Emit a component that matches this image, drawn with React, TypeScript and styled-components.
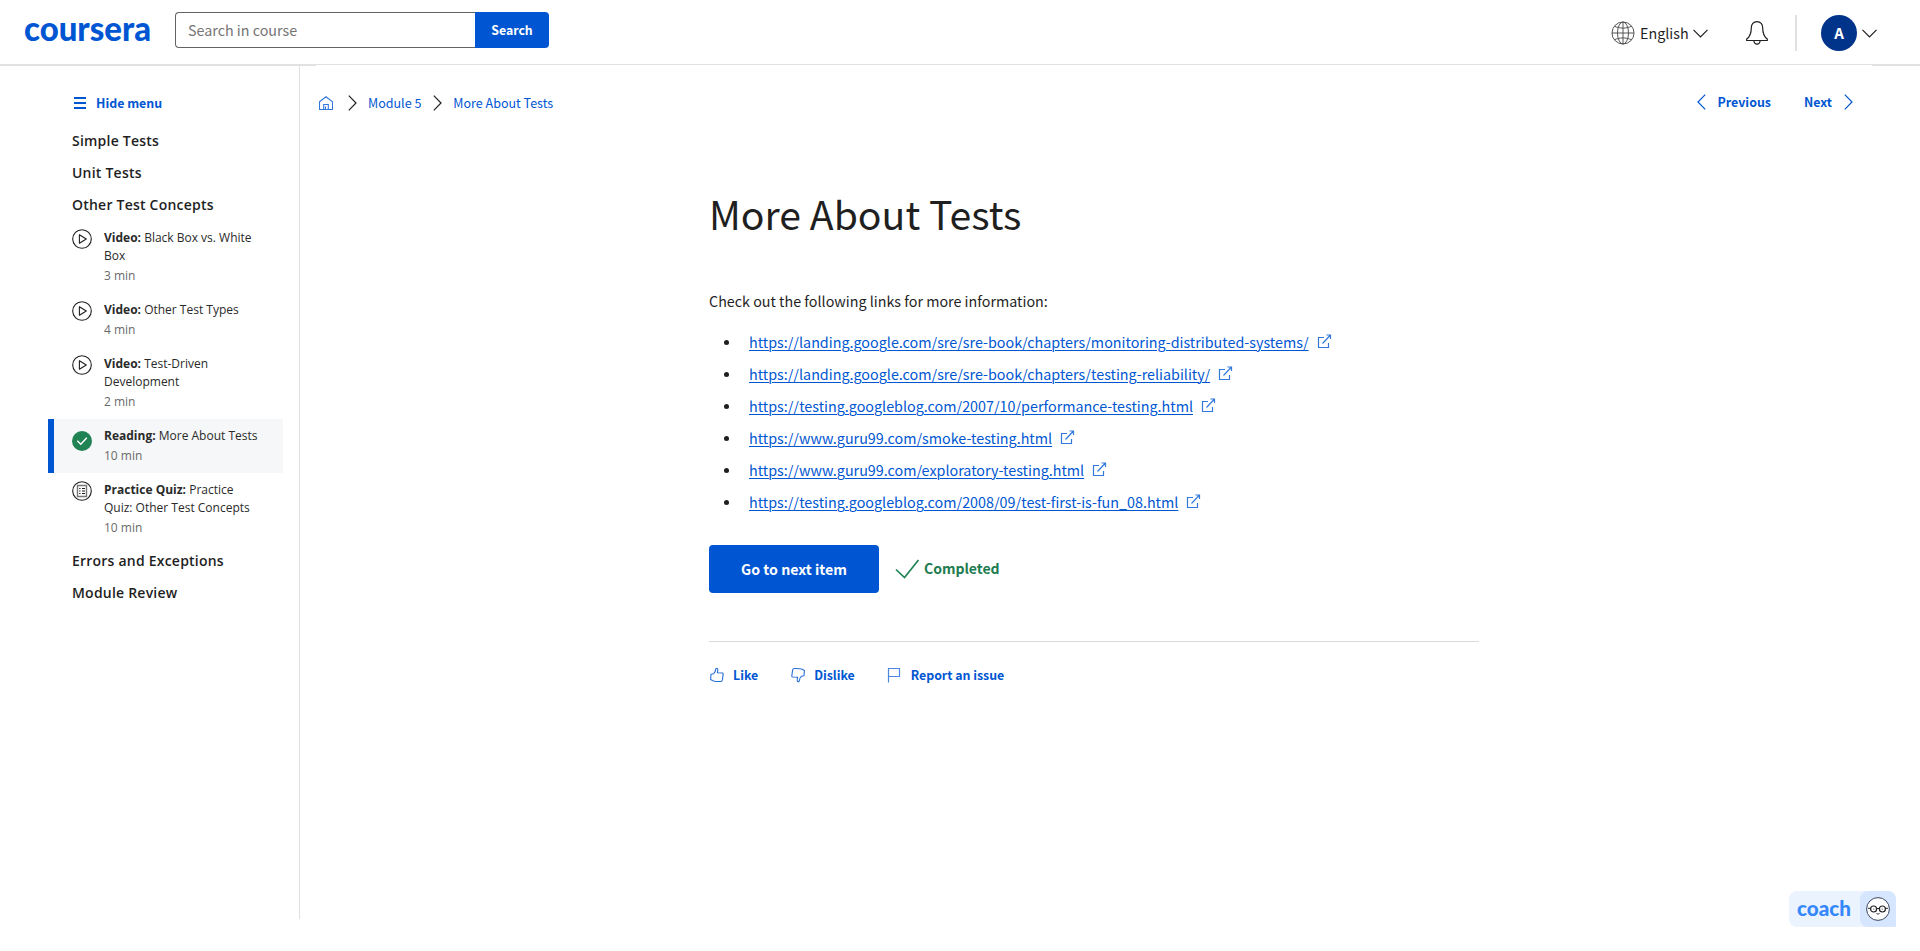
import React from 'react';
import styled, { createGlobalStyle, css } from 'styled-components';

const sans = '"Noto Sans CJK JP", "Noto Sans", sans-serif';
const side = '"Open Sans", sans-serif';
const blue = '#0056d2';

const GlobalStyle = createGlobalStyle`
  *, *::before, *::after { box-sizing: border-box; }
  html, body { margin: 0; padding: 0; }
  body { background: #fff; color: #1f1f1f; font-family: ${sans}; overflow: hidden; }
  a { color: ${blue}; text-decoration: none; }
  svg { display: block; flex: none; }
`;

const Page = styled.div`
  display: flex;
  flex-direction: column;
  height: 951px;
  position: relative;
`;

const Header = styled.header`
  display: flex;
  flex: none;
  height: 65px;
  padding: 0 43px 0 24px;
  border-bottom: 1px solid #e1e1e1;
`;

const Logo = styled.div`
  width: 151px;
  padding-top: 12px;
  svg { overflow: visible; }
`;

const SearchForm = styled.form`
  display: flex;
  width: 374px;
  height: 36px;
  margin-top: 12px;
`;

const SearchInput = styled.input`
  width: 300px;
  border: 1px solid #636363;
  border-right: 0;
  border-radius: 4px 0 0 4px;
  padding: 0 12px 1px;
  font: 400 14.3px ${sans};
  outline: none;
  &::placeholder { color: #757575; opacity: 1; }
`;

const SearchButton = styled.button`
  width: 74px;
  border: 0;
  border-radius: 0 4px 4px 0;
  background: ${blue};
  color: #fff;
  font: 700 12.3px ${sans};
  padding: 0 0 1px;
`;

const HeaderTools = styled.div`
  display: flex;
  margin-left: auto;
  padding-top: 15px;
  height: 51px;
  align-items: center;
`;

const Language = styled.div`
  display: flex;
  align-items: center;
  width: 135px;
  font-size: 14.3px;
  span { width: 58px; padding: 0 0 2px 5px; }
`;

const Bell = styled.div`
  width: 49px;
`;

const HeaderRule = styled.div`
  width: 2px;
  height: 36px;
  background: #e1e1e1;
  margin-right: 24px;
`;

const Avatar = styled.div`
  width: 36px;
  height: 36px;
  margin-right: 5px;
  border-radius: 50%;
  background: #00348a;
  color: #fff;
  font: 700 15px/35px ${sans};
  text-align: center;
`;

const Body = styled.div`
  display: flex;
  flex: none;
  height: 854px;
  border-top: 1px solid #e1e1e1;
`;

const Sidebar = styled.nav`
  width: 300px;
  height: 854px;
  margin-top: -1px;
  border-right: 1px solid #e1e1e1;
  padding: 28px 16px 0 48px;
  font-family: ${side};
`;

const HideMenu = styled.button`
  display: flex;
  align-items: center;
  height: 20px;
  margin-bottom: 12px;
  padding: 0 0 0 26px;
  gap: 10px;
  border: 0;
  background: none;
  color: ${blue};
  font: 700 12.4px/20px ${sans};
`;

const SectionTitle = styled.h2`
  margin: 0;
  padding-left: 24px;
  font: 600 14px/32px ${side};
  letter-spacing: 0.22px;
  color: #1f1f1f;
`;

const Item = styled.div<{ $active?: boolean }>`
  display: flex;
  padding: 8px 24px 8px 24px;
  ${p => p.$active && css`
    background: #f5f7f8;
    border-left: 6px solid ${blue};
    padding-left: 18px;
  `}
`;

const ItemIcon = styled.div<{ $active?: boolean }>`
  width: 32px;
  flex: none;
  padding-top: ${p => (p.$active ? 4 : 0)}px;
`;

const ItemTitle = styled.div`
  font-size: 12px;
  line-height: 18px;
  color: #2a2a2a;
  strong { font-weight: 700; }
`;

const ItemMeta = styled.div`
  margin-top: 2px;
  font-size: 12px;
  line-height: 18px;
  color: #6a6a6a;
`;

const Main = styled.main`
  width: 1556px;
  margin: -1px 0 0 16px;
  background: #fff;
  padding: 0 16px 0 3px;
`;

const TopBar = styled.div`
  display: flex;
  justify-content: space-between;
  height: 76px;
  padding-top: 27px;
`;

const Crumbs = styled.div`
  display: flex;
  align-items: center;
  height: 22px;
  font-size: 12.52px;
  a { white-space: nowrap; padding-bottom: 2px; }
`;

const CrumbGap = styled.span<{ $left: number }>`
  padding: 0 11px 0 ${p => p.$left}px;
`;

const Pager = styled.div`
  display: flex;
  height: 20px;
  gap: 33px;
  padding-right: 3px;
`;

const PagerLink = styled.a`
  display: flex;
  align-items: center;
  gap: 12px;
  font-size: 12.4px;
  font-weight: 700;
`;

const Article = styled.article`
  width: 770px;
  margin: 45px 0 0 390px;
`;

const Title = styled.h1`
  margin: 0 0 49px;
  font-size: 39.2px;
  font-weight: 400;
  line-height: 54px;
`;

const Lead = styled.p`
  margin: 0;
  font-size: 14.32px;
  line-height: 24px;
`;

const LinkList = styled.ul`
  margin: 12px 0 0;
  padding: 0;
  list-style: none;
`;

const LinkItem = styled.li`
  display: flex;
  align-items: center;
  height: 32px;
  font-size: 14.33px;
  &::before {
    content: '';
    width: 5px;
    height: 5px;
    margin: 2px 20px 0 15px;
    border-radius: 50%;
    background: #1f1f1f;
  }
  a { text-decoration: underline; text-underline-offset: 2px; text-decoration-thickness: 1px; margin-right: 8px; }
`;

const Actions = styled.div`
  display: flex;
  height: 48px;
  margin-top: 28px;
`;

const NextButton = styled.button`
  width: 170px;
  height: 48px;
  margin-right: 16px;
  border: 0;
  border-radius: 4px;
  background: ${blue};
  color: #fff;
  font: 700 14.2px ${sans};
`;

const Completed = styled.div`
  display: flex;
  align-items: center;
  height: 46px;
  color: #1d7c50;
  font-size: 14px;
  font-weight: 700;
  gap: 4px;
  svg { margin-top: 2px; }
`;

const Feedback = styled.div`
  display: flex;
  margin-top: 48px;
  padding-top: 23px;
  border-top: 1px solid #dadada;
  gap: 32px;
`;

const FeedbackLink = styled.a`
  display: flex;
  align-items: center;
  gap: 8px;
  height: 20px;
  font-size: 12.35px;
  font-weight: 700;
`;

const Coach = styled.div`
  position: absolute;
  right: 24px;
  bottom: 24px;
  display: flex;
  width: 107px;
  height: 36px;
  border-radius: 8px 8px 0 8px;
  background: #ebf3ff;
  overflow: hidden;
`;

const CoachLabel = styled.div`
  width: 71px;
  padding: 4px 0 0 8px;
`;

const CoachFace = styled.div`
  display: flex;
  align-items: center;
  justify-content: center;
  width: 36px;
  border-radius: 8px 0 0 8px;
  background: #d6e6ff;
`;

const Chevron = ({ dir, color = '#1f1f1f' }: { dir: 'left' | 'right' | 'down'; color?: string }) => {
  const down = dir === 'down';
  const d = { left: 'M8.2 .7 1 8l7.200 7.300', right: 'M.8 .7 8 8 .8 15.300', down: 'M.5 .8 7.500 7.800 14.500 .8' }[dir];
  return (
    <svg width={down ? 15 : 9} height={down ? 9 : 16} viewBox={down ? '0 0 15 9' : '0 0 9 16'} fill="none" stroke={color} strokeWidth="1.200">
      <path d={d} />
    </svg>
  );
};

const PlayIcon = () => (
  <svg width="20" height="20" viewBox="0 0 20 20" fill="none" stroke="#1f1f1f" strokeWidth="1.100">
    <circle cx="10" cy="10" r="9.300" />
    <path d="M7.400 5.700v8.600l6.900-4.300z" strokeLinejoin="round" />
  </svg>
);

const DoneIcon = () => (
  <svg width="20" height="20" viewBox="0 0 20 20" fill="none">
    <circle cx="10" cy="10" r="10" fill="#1f8354" />
    <path d="M5.300 9.800l3.500 3.400 6-6.500" stroke="#fff" strokeWidth="1.500" />
  </svg>
);

const QuizIcon = () => (
  <svg width="20" height="20" viewBox="0 0 20 20" fill="none" stroke="#1f1f1f">
    <circle cx="10" cy="10" r="9.300" strokeWidth="1.100" />
    <path d="M5.500 4.500h9v11h-9z" stroke="#777" strokeWidth="1.400" />
    <path d="M7.200 7.500h1.300M7.200 10h1.300M7.200 12.500h1.300M10 7.500h3M10 10h3M10 12.500h3" strokeWidth="1" />
  </svg>
);

const ExternalIcon = () => (
  <svg width="15" height="15" viewBox="0 0 15 15" fill="none" stroke={blue} strokeWidth="1.200">
    <path d="M7 3.500H1.500v10h10V9M5.500 9.500 13.500 1M9.500 1h4v4" opacity=".8" />
  </svg>
);

const ThumbIcon = ({ flip }: { flip?: boolean }) => (
  <svg width="16" height="16" viewBox="0 0 16 16" fill="none" stroke={blue} strokeWidth="1.100" strokeLinejoin="round">
    <path
      transform={flip ? 'rotate(180 8 8)' : undefined}
      d="M2 7.300l2.700-.6c1.200-1.100 1.900-2.600 2.100-4.800.1-.9 1.700-.8 1.900.3.200 1.300 0 2.200-.3 3.500l5 .3c.7.100.9.6.8 1.200l-.8 5.600c-.2 1-.7 1.700-1.500 1.700-2.900.1-5.600 0-7.400-.6L1.600 12.500z"
      opacity=".85"
    />
  </svg>
);

const items = [
  { kind: 'Video', name: 'Black Box vs. White Box', time: '3 min', icon: <PlayIcon /> },
  { kind: 'Video', name: 'Other Test Types', time: '4 min', icon: <PlayIcon /> },
  { kind: 'Video', name: 'Test-Driven Development', time: '2 min', icon: <PlayIcon /> },
  { kind: 'Reading', name: 'More About Tests', time: '10 min', icon: <DoneIcon />, active: true },
  { kind: 'Practice Quiz', name: 'Practice Quiz: Other Test Concepts', time: '10 min', icon: <QuizIcon /> },
];

const links = [
  'https://landing.google.com/sre/sre-book/chapters/monitoring-distributed-systems/',
  'https://landing.google.com/sre/sre-book/chapters/testing-reliability/',
  'https://testing.googleblog.com/2007/10/performance-testing.html',
  'https://www.guru99.com/smoke-testing.html',
  'https://www.guru99.com/exploratory-testing.html',
  'https://testing.googleblog.com/2008/09/test-first-is-fun_08.html',
];

export default function App() {
  return (
    <Page>
      <GlobalStyle />
      <Header>
        <Logo>
          <svg width="130" height="38" viewBox="0 0 130 38">
            <text x="0" y="28.800" textLength="127" lengthAdjust="spacingAndGlyphs" fontFamily="Lato" fontWeight="900" fontSize="34" fill={blue}>coursera</text>
          </svg>
        </Logo>
        <SearchForm>
          <SearchInput placeholder="Search in course" />
          <SearchButton type="button">Search</SearchButton>
        </SearchForm>
        <HeaderTools>
          <Language>
            <svg width="24" height="24" viewBox="0 0 24 24" fill="none" stroke="#555" strokeWidth="1">
              <circle cx="12" cy="12" r="11" />
              <ellipse cx="12" cy="12" rx="5.500" ry="11" />
              <path d="M12 1v22M1 12h22M3.500 5.200c5 2.500 12 2.500 17 0M3.500 18.800c5-2.500 12-2.500 17 0" />
            </svg>
            <span>English</span>
            <Chevron dir="down" />
          </Language>
          <Bell>
            <svg width="22" height="24" viewBox="0 0 22 24" fill="none" stroke="#1f1f1f" strokeWidth="1.200" strokeLinejoin="round">
              <path d="M11 .7c-3.600 0-5.700 2.600-5.700 6 0 6.300-1.600 9.200-4.600 11.300v1.500h20.600V18c-3-2.100-4.600-5-4.600-11.300 0-3.400-2.100-6-5.700-6zM7.800 19.500c.2 2.200 1.400 3.600 3.200 3.600s3-1.400 3.200-3.600" />
            </svg>
          </Bell>
          <HeaderRule />
          <Avatar>A</Avatar>
          <Chevron dir="down" />
        </HeaderTools>
      </Header>
      <Body>
        <Sidebar>
          <HideMenu>
            <svg width="12" height="12" viewBox="0 0 12 12" fill={blue}><path d="M0 0h12v2H0zM0 5h12v2H0zM0 10h12v2H0z" /></svg>
            Hide menu
          </HideMenu>
          <SectionTitle>Simple Tests</SectionTitle>
          <SectionTitle>Unit Tests</SectionTitle>
          <SectionTitle>Other Test Concepts</SectionTitle>
          {items.map(i => (
            <Item key={i.name} $active={i.active}>
              <ItemIcon $active={i.active}>{i.icon}</ItemIcon>
              <div>
                <ItemTitle><strong>{i.kind}:</strong> {i.name}</ItemTitle>
                <ItemMeta>{i.time}</ItemMeta>
              </div>
            </Item>
          ))}
          <SectionTitle>Errors and Exceptions</SectionTitle>
          <SectionTitle>Module Review</SectionTitle>
        </Sidebar>
        <Main>
          <TopBar>
            <Crumbs>
              <svg width="14" height="14" viewBox="0 0 14 14" fill="none" stroke={blue} strokeWidth="1.100">
                <path d="M.5 5.800 7 .7l6.500 5.100v7.700H.5zM4.700 13.500v-5h4.600v5M6.500 10.500v3" opacity=".8" />
              </svg>
              <CrumbGap $left={15}><Chevron dir="right" /></CrumbGap>
              <a>Module 5</a>
              <CrumbGap $left={12}><Chevron dir="right" /></CrumbGap>
              <a>More About Tests</a>
            </Crumbs>
            <Pager>
              <PagerLink><Chevron dir="left" color={blue} />Previous</PagerLink>
              <PagerLink>Next<Chevron dir="right" color={blue} /></PagerLink>
            </Pager>
          </TopBar>
          <Article>
            <Title>More About Tests</Title>
            <Lead>Check out the following links for more information:</Lead>
            <LinkList>
              {links.map(l => (
                <LinkItem key={l}><a>{l}</a><ExternalIcon /></LinkItem>
              ))}
            </LinkList>
            <Actions>
              <NextButton>Go to next item</NextButton>
              <Completed>
                <svg width="25" height="20" viewBox="0 0 25 20" fill="none" stroke="#1f8354" strokeWidth="1.700"><path d="M1 10.500l8.500 8L23.500 1" /></svg>
                Completed
              </Completed>
            </Actions>
            <Feedback>
              <FeedbackLink><ThumbIcon />Like</FeedbackLink>
              <FeedbackLink><ThumbIcon flip />Dislike</FeedbackLink>
              <FeedbackLink>
                <svg width="16" height="16" viewBox="0 0 16 16" fill="none" stroke={blue} strokeWidth="1.200"><path d="M1.500 15.500V1.500h11v8h-11" opacity=".7" /></svg>
                Report an issue
              </FeedbackLink>
            </Feedback>
          </Article>
        </Main>
      </Body>
      <Coach>
        <CoachLabel>
          <svg width="56" height="28" viewBox="0 0 56 28">
            <text x="0" y="20.500" textLength="54" lengthAdjust="spacingAndGlyphs" fontFamily="Lato" fontWeight="900" fontSize="20" fill="#3587fc">coach</text>
          </svg>
        </CoachLabel>
        <CoachFace>
          <svg width="24" height="24" viewBox="0 0 24 24" fill="none" stroke="#222">
            <circle cx="12" cy="12" r="11.400" fill="#fff" stroke="#3b465c" />
            <circle cx="7.600" cy="12" r="3" strokeWidth="1.200" />
            <circle cx="16.400" cy="12" r="3" strokeWidth="1.200" />
            <path d="M2 11.300h2.600M10.600 11.500h2.800M19.400 11.300H22M10.500 16.500c1 .7 2 .7 3 0" />
            <circle cx="7.800" cy="12" r=".6" fill="#222" stroke="none" />
            <circle cx="16.200" cy="12" r=".6" fill="#222" stroke="none" />
          </svg>
        </CoachFace>
      </Coach>
    </Page>
  );
}
